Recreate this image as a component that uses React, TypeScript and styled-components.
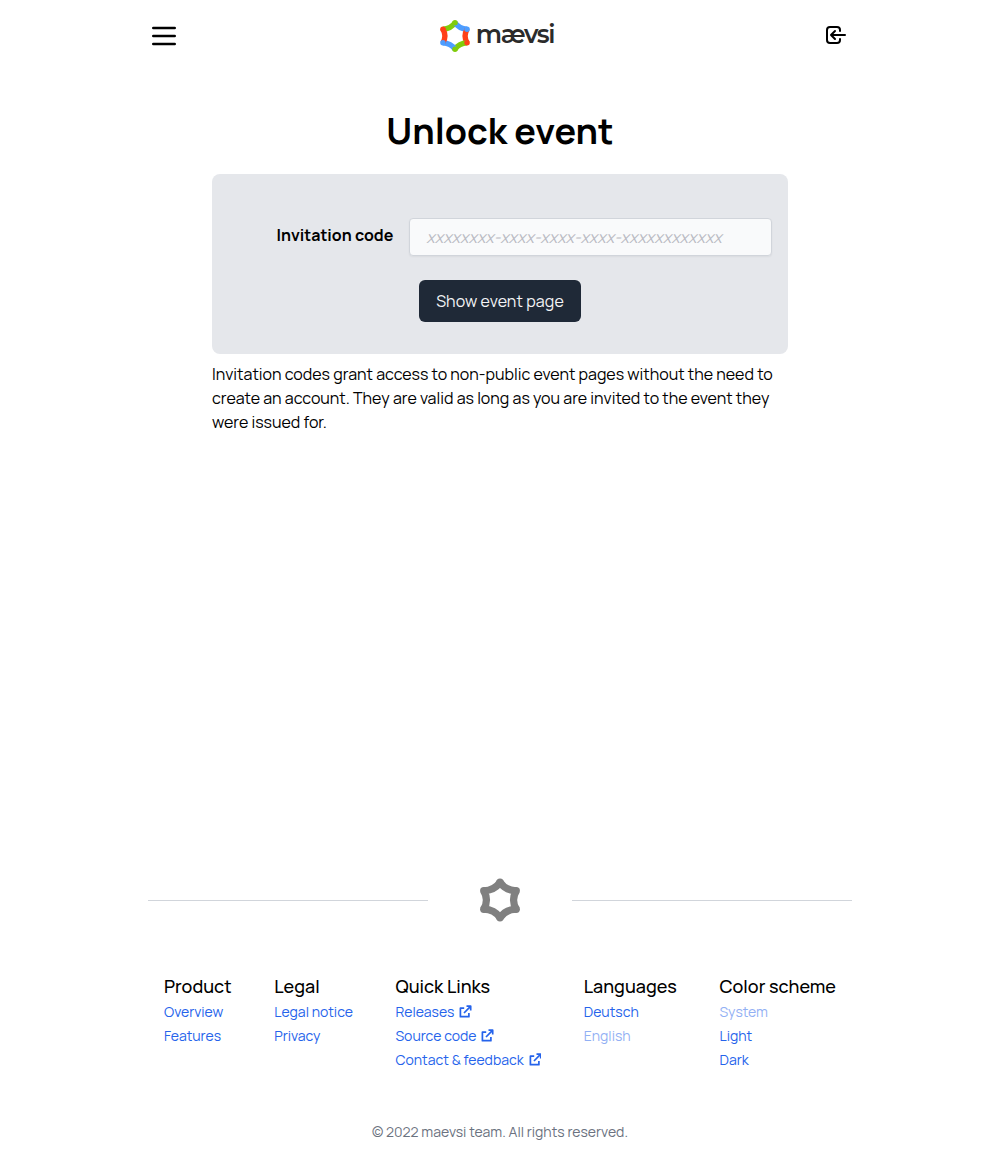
import React from 'react';
import styled, { createGlobalStyle } from 'styled-components';

const GlobalStyle = createGlobalStyle`
  *, *::before, *::after { box-sizing: border-box; }
  body {
    margin: 0;
    background: #fff;
    color: #000;
    font-family: Manrope, Inter, "Noto Sans", sans-serif;
    font-size: 16px;
    line-height: 24px;
  }
`;

const Page = styled.div`
  width: 704px;
  min-height: 1160px;
  margin: 0 auto;
  display: flex;
  flex-direction: column;
`;

const Header = styled.header`
  display: flex;
  align-items: center;
  justify-content: space-between;
  height: 72px;
`;

const IconButton = styled.button<{ $lift?: number }>`
  display: flex;
  width: 32px;
  justify-content: center;
  padding: 0 0 ${(p) => p.$lift ?? 0}px;
  border: 0;
  background: none;
  color: #000;
`;

const Brand = styled.a`
  display: flex;
  align-items: center;
  gap: 6px;
  margin-right: 6px;
  height: 72px;
`;

const BrandName = styled.span`
  font-family: Montserrat, Inter, sans-serif;
  font-size: 25px;
  font-weight: 650;
  line-height: 32px;
  letter-spacing: -1.4px;
  color: #2b2b2b;
  padding-bottom: 4px;
`;

const Main = styled.main`
  width: 576px;
  margin: 0 auto;
  flex: 1;
  display: flex;
  flex-direction: column;
`;

const Title = styled.h1`
  margin: 36px 0 20px;
  font-size: 36px;
  line-height: 46px;
  font-weight: 700;
  text-align: center;
  white-space: nowrap;
`;

const Form = styled.form`
  display: flex;
  flex-direction: column;
  align-items: center;
  gap: 24px;
  height: 180px;
  padding: 44px 16px 0;
  border-radius: 8px;
  background: #e5e7eb;
`;

const Field = styled.div`
  display: flex;
  width: 100%;
  gap: 16px;
`;

const Label = styled.label`
  width: 165.33px;
  padding-top: 5px;
  font-weight: 700;
  text-align: right;
`;

const Input = styled.input`
  width: 362.67px;
  height: 38px;
  padding: 8px 16px;
  border: 1px solid #d1d5db;
  border-radius: 4px;
  background: #f9fafb;
  box-shadow: 0 1px 2px rgba(0, 0, 0, 0.05);
  font: inherit;
  &::placeholder {
    color: #b9bbc3;
    font-style: italic;
    opacity: 1;
  }
`;

const Submit = styled.button`
  width: 162px;
  height: 42px;
  padding: 0;
  border: 0;
  border-radius: 6px;
  background: #1f2937;
  color: #f3f4f6;
  font: inherit;
  letter-spacing: 0.1px;
  white-space: nowrap;
`;

const Hint = styled.p`
  margin: 8px 0 0;
`;

const Divider = styled.div`
  display: flex;
  align-items: center;
  gap: 52px;
  height: 44px;
`;

const Rule = styled.hr`
  flex: 1;
  height: 1px;
  margin: 0;
  border: 0;
  background: #d1d5db;
`;

const FooterNav = styled.nav`
  display: flex;
  justify-content: space-between;
  padding: 0 16px;
  margin-top: 50px;
  height: 100px;
`;

const Column = styled.div`
  display: flex;
  flex-direction: column;
`;

const ColumnTitle = styled.div`
  height: 28px;
  font-size: 18px;
  line-height: 28px;
  font-weight: 500;
  white-space: nowrap;
`;

const FooterLink = styled.a<{ $off?: boolean }>`
  display: flex;
  align-items: center;
  gap: 5px;
  font-size: 14px;
  line-height: 24px;
  color: #2563eb;
  opacity: ${(p) => (p.$off ? 0.5 : 1)};
  white-space: nowrap;
`;

const GlyphExternal = styled.svg`
  flex: none;
  margin-bottom: 2px;
`;

const Copyright = styled.p`
  margin: 48px 0 16px;
  font-size: 14px;
  line-height: 24px;
  color: #6b7280;
  text-align: center;
`;

const GREEN = '#80cc0a';
const BLUE = '#4d9dff';
const RED = '#ff4018';

const arcs = [
  { d: 'M3.7 12.3Q14.5 12 20 3.8', x: 3.9, y: 12.3, c: GREEN, end: [20, 3.8] },
  { d: 'M20 3.8Q25.5 12 36.3 12.3', c: BLUE, end: [36.2, 12.3] },
  { d: 'M36.3 12.3Q30.8 21.5 36.3 30.7', c: RED, end: [36.2, 30.7] },
  { d: 'M36.3 30.7Q25.5 31 20 39.2', c: GREEN, end: [20, 39.2] },
  { d: 'M20 39.2Q14.5 31 3.7 30.7', c: BLUE, end: [3.8, 30.7] },
  { d: 'M3.7 30.7Q9.2 21.5 3.7 12.3', c: RED, end: [3.8, 12.3] },
];

const StarSvg = styled.svg`
  flex: none;
`;

const Star = ({ width, height, mono }: { width: number; height: number; mono?: string }) => (
  <StarSvg width={width} height={height} viewBox="0 0 40 43" fill="none" strokeWidth="7.2">
    {arcs.map((a) => (
      <path key={a.d} d={a.d} stroke={mono ?? a.c} />
    ))}
    {arcs.map((a) => (
      <circle key={a.d} cx={a.end[0]} cy={a.end[1]} r="3.7" fill={mono ?? a.c} />
    ))}
  </StarSvg>
);

const MenuIcon = () => (
  <svg width="32" height="32" viewBox="0 0 24 24" fill="none" stroke="currentColor" strokeWidth="2" strokeLinecap="round">
    <path d="M4 6h16M4 12h16M4 18h16" />
  </svg>
);

const SignInIcon = () => (
  <svg width="24" height="24" viewBox="0 0 24 24" fill="none" stroke="currentColor" strokeWidth="2" strokeLinecap="round" strokeLinejoin="round">
    <path d="M11 16l-4-4m0 0l4-4m-4 4h14m-5 4v1a3 3 0 01-3 3H6a3 3 0 01-3-3V7a3 3 0 013-3h7a3 3 0 013 3v1" />
  </svg>
);

const ExternalIcon = () => (
  <GlyphExternal width="12.5" height="13" viewBox="0 0 12.5 13" fill="none" stroke="currentColor" strokeWidth="1.7" strokeLinejoin="round">
    <path d="M5.2 3.2H1.4v8.5h8.5V8M7.5 1.2h4.2v4.2M11.5 1.4L5 8" />
  </GlyphExternal>
);

type Item = { text: string; off?: boolean; external?: boolean };
const columns: { title: string; items: Item[] }[] = [
  { title: 'Product', items: [{ text: 'Overview' }, { text: 'Features' }] },
  { title: 'Legal', items: [{ text: 'Legal notice' }, { text: 'Privacy' }] },
  {
    title: 'Quick Links',
    items: [
      { text: 'Releases', external: true },
      { text: 'Source code', external: true },
      { text: 'Contact & feedback', external: true },
    ],
  },
  { title: 'Languages', items: [{ text: 'Deutsch' }, { text: 'English', off: true }] },
  { title: 'Color scheme', items: [{ text: 'System', off: true }, { text: 'Light' }, { text: 'Dark' }] },
];

export default function App() {
  return (
    <>
      <GlobalStyle />
      <Page>
        <Header>
          <IconButton aria-label="Menu"><MenuIcon /></IconButton>
          <Brand>
            <Star width={30} height={32} />
            <BrandName>mævsi</BrandName>
          </Brand>
          <IconButton aria-label="Sign in" $lift={2}><SignInIcon /></IconButton>
        </Header>
        <Main>
          <Title>Unlock event</Title>
          <Form>
            <Field>
              <Label htmlFor="code">Invitation code</Label>
              <Input id="code" placeholder="xxxxxxxx-xxxx-xxxx-xxxx-xxxxxxxxxxxx" />
            </Field>
            <Submit type="button">Show event page</Submit>
          </Form>
          <Hint>
            Invitation codes grant access to non-public event pages without the need to create an
            account. They are valid as long as you are invited to the event they were issued for.
          </Hint>
        </Main>
        <footer>
          <Divider>
            <Rule />
            <Star width={40} height={44} mono="#808080" />
            <Rule />
          </Divider>
          <FooterNav>
            {columns.map((c) => (
              <Column key={c.title}>
                <ColumnTitle>{c.title}</ColumnTitle>
                {c.items.map((i) => (
                  <FooterLink key={i.text} $off={i.off}>
                    {i.text}
                    {i.external && <ExternalIcon />}
                  </FooterLink>
                ))}
              </Column>
            ))}
          </FooterNav>
          <Copyright>© 2022 maevsi team. All rights reserved.</Copyright>
        </footer>
      </Page>
    </>
  );
}
